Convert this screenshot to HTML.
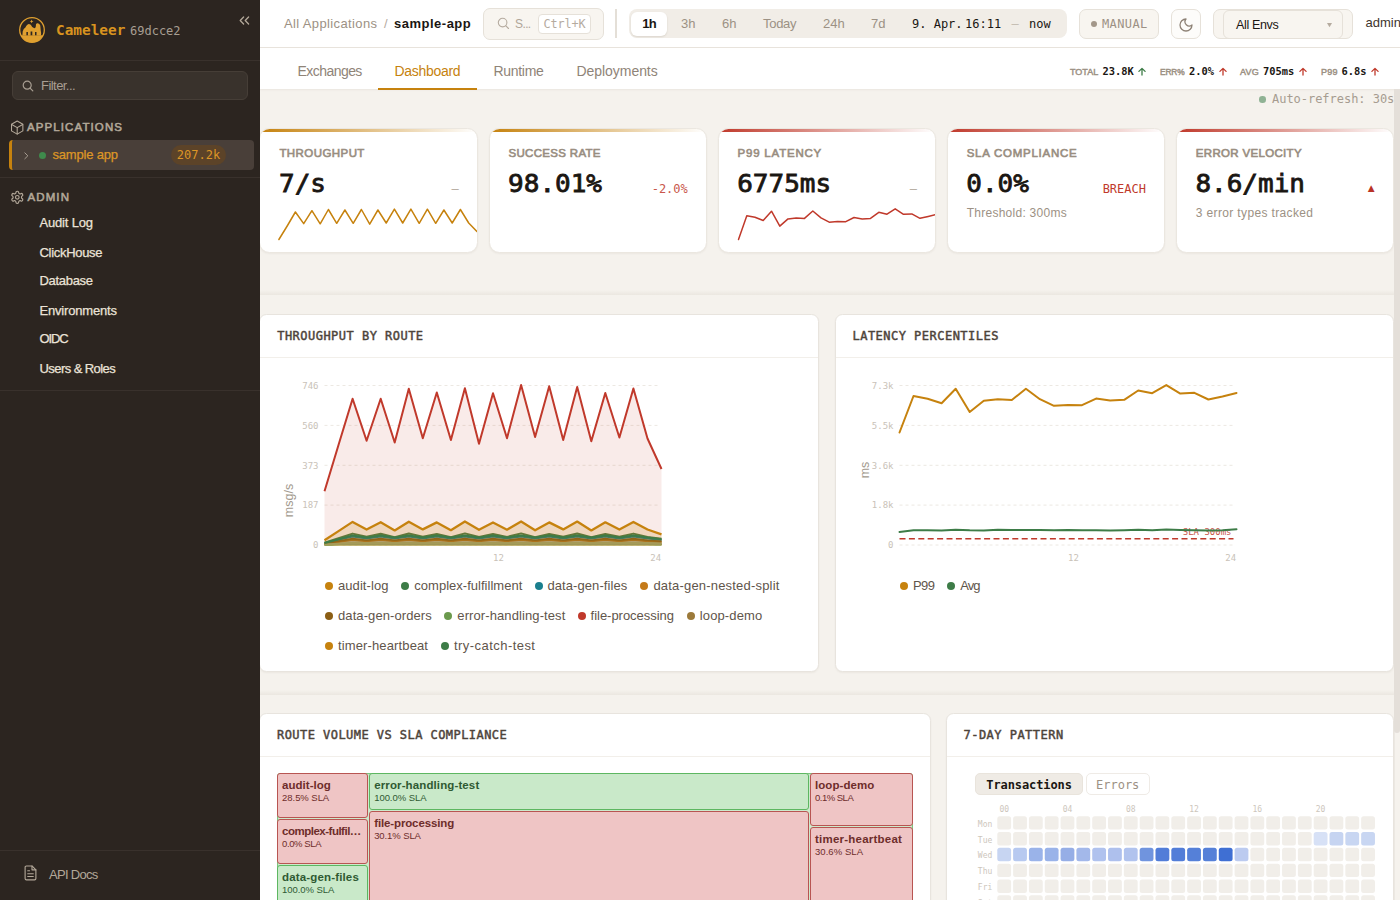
<!DOCTYPE html>
<html lang="en">
<head>
<meta charset="utf-8">
<title>Cameleer – sample-app Dashboard</title>
<style>
*{box-sizing:border-box;margin:0;padding:0}
html,body{width:1400px;height:900px;overflow:hidden}
body{position:relative;background:#f5f2ed;font-family:"Liberation Sans",Arial,sans-serif;font-size:13px;color:#1a1612;-webkit-font-smoothing:antialiased}
.mono{font-family:"DejaVu Sans Mono","Liberation Mono",monospace}
.abs{position:absolute;white-space:nowrap}
svg{position:absolute;overflow:visible}

/* ---------- sidebar ---------- */
#sidebar{position:absolute;left:0;top:0;width:260px;height:900px;background:#2c2520;color:#e8e0d4;z-index:5}
#sidebar .hr{position:absolute;left:0;width:260px;height:1px;background:#39312c}
#brand{left:56px;top:20px;line-height:20px;font-size:14.4px;font-weight:700;color:#d8931f}
#ver{left:130px;top:22px;line-height:18px;font-size:12px;color:#a89e92}
#filter{position:absolute;left:12px;top:71px;width:236px;height:29px;border-radius:6px;background:#39322c;border:1px solid #463e37}
#filter span{left:28px;top:4.5px;line-height:18px;font-size:13px;letter-spacing:-.55px;color:#a89e92}
.sect{font-size:11.5px;font-weight:400;letter-spacing:1.1px;color:#b3a899;line-height:16px;-webkit-text-stroke:.55px #b3a899}
#approw{position:absolute;left:9px;top:140px;width:245px;height:30px;border-radius:4px;background:#493f39;border-left:3px solid #c6820e;overflow:hidden}
#badge{position:absolute;left:171px;top:145px;width:55px;height:20px;border-radius:10px;background:#5c4328;color:#dc9626;font-size:12px;line-height:20px;text-align:center}
.nav{left:39.5px;font-size:13px;line-height:18px;color:#ebe3d8;-webkit-text-stroke:.25px #ebe3d8}

/* ---------- top bar ---------- */
#topbar{position:absolute;left:260px;top:0;width:1140px;height:48px;background:#fff;border-bottom:1px solid #e9e4dd}
#tabbar{position:absolute;left:260px;top:48px;width:1140px;height:41px;background:#fff;box-shadow:0 1px 2px rgba(60,40,20,.06)}
.muted{color:#9c9184}
.tab{top:61px;line-height:18px;font-size:14px;color:#8f8478}
.box{position:absolute;border:1px solid #e6e1d9;border-radius:7px;background:#f8f5f0}
.rng{top:14.9px;line-height:18px;font-size:13px;color:#9c9184}
.stl{top:65px;line-height:14px;font-size:9px;font-weight:400;letter-spacing:0;color:#9c9184;-webkit-text-stroke:.45px #9c9184}
.stv{top:63px;line-height:16px;font-size:10.4px;font-weight:700;color:#1a1612}

/* ---------- content ---------- */
.card{position:absolute;background:#fff;border:1px solid #e8e4de;border-radius:7.5px;box-shadow:0 1px 2px rgba(60,40,20,.05)}
.kpi{position:absolute;top:128px;width:218.3px;height:125px;background:#fff;border:1px solid #ebe7e0;border-radius:10.5px;box-shadow:0 1px 2px rgba(60,40,20,.05);overflow:hidden}
.kpi .stripe{position:absolute;left:0;top:0;width:100%;height:3px}
.kpi .lbl{left:19px;top:16.2px;line-height:16px;font-size:11.5px;font-weight:400;letter-spacing:.43px;color:#988d80;-webkit-text-stroke:.6px #988d80}
.kpi .val{left:18.6px;top:36.9px;line-height:34px;font-size:26px;font-weight:400;color:#1a1612;-webkit-text-stroke:.85px #1a1612;transform:scaleY(.935);transform-origin:0 26.3px}
.kpi .sub{left:19px;top:75.5px;line-height:16px;font-size:12px;color:#9c9184}
.kpi .trend{right:18px;top:51.5px;line-height:16px;font-size:12px}
.sep{position:absolute;left:260px;width:1134px;height:5px;background:linear-gradient(to bottom,rgba(235,231,224,0),#ebe7e0)}
.ctitle{line-height:16px;font-size:12px;font-weight:400;letter-spacing:.48px;color:#4d433a;-webkit-text-stroke:.45px #4d433a}
.chr{position:absolute;left:0;width:100%;height:1px;background:#f2efea}
.ax{font-family:"DejaVu Sans Mono","Liberation Mono",monospace;font-size:9px;fill:#c9c2b8}
.lg{line-height:18px;font-size:13px;color:#5f554b}
.tm{position:absolute;border-radius:3px;overflow:hidden}
.tm.r{background:#efc5c5;border:1.2px solid #b85552;color:#6e2d2b}
.tm.g{background:#c9e9c9;border:1.2px solid #5db761;color:#2f5a33}
.tm b{position:absolute;left:3.9px;top:2.6px;line-height:16px;font-size:11.5px;font-weight:700;white-space:nowrap}
.tm span{position:absolute;left:3.9px;top:16.6px;line-height:14px;font-size:9.5px;white-space:nowrap}
</style>
</head>
<body>

<!-- ======================= SIDEBAR ======================= -->
<aside id="sidebar">
  <svg style="left:19px;top:16.8px" width="26" height="26" viewBox="0 0 26 26">
    <circle cx="13" cy="13" r="12.3" fill="#2c2520" stroke="#dfa030" stroke-width="1.3"/>
    <path d="M1.9 18.2A12.2 12.2 0 0 0 24.1 18.2Z" fill="#dfa030"/>
    <path d="M3.4 18.4L3.7 14.6Q4.4 11.6 6.4 10.6Q8 7 10 7Q12 7 13.2 10L15.4 11.3Q16.6 11.3 16.8 9.6L17 7.3Q17.5 6.1 18.8 6.3L20.3 7Q21.5 8.2 21.4 9.8L21.7 13.2Q22.3 15.4 22 18.4Z" fill="#dfa030"/>
    <path d="M7.4 15h1.5v3.2H7.4zM11.6 14.6h1.7v3.6h-1.7zM16 15h1.5v3.2H16z" fill="#2c2520"/>
    <path d="M12.6 2.6l.6 1.3 1.3.5-1.3.5-.6 1.3-.6-1.3-1.3-.5 1.3-.5z" fill="#dfa030"/>
  </svg>
  <div class="abs mono" id="brand">Cameleer</div>
  <div class="abs mono" id="ver">69dcce2</div>
  <svg style="left:239px;top:16px" width="11" height="9" viewBox="0 0 11 9" fill="none" stroke="#b3a899" stroke-width="1.3" stroke-linecap="round" stroke-linejoin="round"><path d="M4.6 1L1.2 4.5 4.6 8M9.6 1L6.2 4.5 9.6 8"/></svg>
  <div class="hr" style="top:60px"></div>

  <div id="filter">
    <svg style="left:9px;top:8px" width="12" height="12" viewBox="0 0 12 12" fill="none" stroke="#a89e92" stroke-width="1.2" stroke-linecap="round"><circle cx="5.2" cy="5.2" r="4"/><path d="M8.3 8.3l2.5 2.5"/></svg>
    <span class="abs">Filter...</span>
  </div>

  <svg style="left:9.8px;top:119.8px" width="14.4" height="15.3" viewBox="0 0 16 17" fill="none" stroke="#b3a899" stroke-width="1.2" stroke-linejoin="round" stroke-linecap="round"><path d="M8 1.2l6.3 3.5v7.4L8 15.7l-6.3-3.6V4.7z"/><path d="M1.9 4.9L8 8.5l6.1-3.6M8 8.5v7"/></svg>
  <div class="abs sect" style="left:27px;top:119px">APPLICATIONS</div>

  <div id="approw"></div>
  <svg style="left:24.3px;top:151.6px" width="5" height="7.6" viewBox="0 0 6 9" fill="none" stroke="#a89e92" stroke-width="1.2" stroke-linecap="round" stroke-linejoin="round"><path d="M1 1l3.6 3.5L1 8"/></svg>
  <div style="position:absolute;left:39.2px;top:151.6px;width:7.2px;height:7.2px;border-radius:50%;background:#3f8a4c"></div>
  <div class="abs" style="left:52.5px;top:146px;line-height:18px;font-size:13px;letter-spacing:-.19px;color:#dc9626;-webkit-text-stroke:.25px #dc9626">sample app</div>
  <div id="badge" class="mono">207.2k</div>
  <div class="hr" style="top:177px"></div>

  <svg style="left:9.6px;top:189.6px" width="14.6" height="14.6" viewBox="0 0 24 24" fill="none" stroke="#b3a899" stroke-width="1.9" stroke-linecap="round" stroke-linejoin="round"><path d="M12.22 2h-.44a2 2 0 0 0-2 2v.18a2 2 0 0 1-1 1.73l-.43.25a2 2 0 0 1-2 0l-.15-.08a2 2 0 0 0-2.73.73l-.22.38a2 2 0 0 0 .73 2.73l.15.1a2 2 0 0 1 1 1.72v.51a2 2 0 0 1-1 1.74l-.15.09a2 2 0 0 0-.73 2.73l.22.38a2 2 0 0 0 2.73.73l.15-.08a2 2 0 0 1 2 0l.43.25a2 2 0 0 1 1 1.73V20a2 2 0 0 0 2 2h.44a2 2 0 0 0 2-2v-.18a2 2 0 0 1 1-1.73l.43-.25a2 2 0 0 1 2 0l.15.08a2 2 0 0 0 2.73-.73l.22-.39a2 2 0 0 0-.73-2.73l-.15-.08a2 2 0 0 1-1-1.74v-.5a2 2 0 0 1 1-1.74l.15-.09a2 2 0 0 0 .73-2.73l-.22-.38a2 2 0 0 0-2.73-.73l-.15.08a2 2 0 0 1-2 0l-.43-.25a2 2 0 0 1-1-1.73V4a2 2 0 0 0-2-2z"/><circle cx="12" cy="12" r="3"/></svg>
  <div class="abs sect" style="left:27.5px;top:189px">ADMIN</div>
  <div class="abs nav" style="top:214px;letter-spacing:-.18px">Audit Log</div>
  <div class="abs nav" style="top:244px;letter-spacing:-.3px">ClickHouse</div>
  <div class="abs nav" style="top:272px;letter-spacing:-.3px">Database</div>
  <div class="abs nav" style="top:302px;letter-spacing:-.18px">Environments</div>
  <div class="abs nav" style="top:330px;letter-spacing:-1.1px">OIDC</div>
  <div class="abs nav" style="top:360px;letter-spacing:-.57px">Users &amp; Roles</div>
  <div class="hr" style="top:390px"></div>

  <div class="hr" style="top:850px"></div>
  <svg style="left:23.6px;top:864.6px" width="13" height="15.8" viewBox="0 0 14 17" fill="none" stroke="#b3a899" stroke-width="1.2" stroke-linejoin="round" stroke-linecap="round"><path d="M8.6 1H2.6A1.4 1.4 0 0 0 1.2 2.4v12.2A1.4 1.4 0 0 0 2.6 16h8.8a1.4 1.4 0 0 0 1.4-1.4V5.2z"/><path d="M8.6 1v4.2h4.2M4 6.2h2M4 9.4h6M4 12.4h6"/></svg>
  <div class="abs" style="left:49px;top:866px;line-height:18px;font-size:13px;letter-spacing:-.7px;color:#b3a899">API Docs</div>
</aside>

<!-- ======================= TOP BAR ======================= -->
<header id="topbar">
  <div class="abs muted" style="left:24px;top:15px;line-height:18px;font-size:13px;letter-spacing:.37px">All Applications</div>
  <div class="abs" style="left:124px;top:15px;line-height:18px;font-size:13px;color:#b5ab9f">/</div>
  <div class="abs" style="left:134px;top:15px;line-height:18px;font-size:13px;font-weight:700;letter-spacing:.5px;color:#1a1612">sample-app</div>

  <div class="box" style="left:223px;top:8px;width:120.5px;height:31.5px">
    <svg style="left:13px;top:8px" width="13" height="13" viewBox="0 0 13 13" fill="none" stroke="#b5ab9f" stroke-width="1.1" stroke-linecap="round"><circle cx="5.6" cy="5.6" r="4.3"/><path d="M8.9 8.9l2.6 2.6"/></svg>
    <div class="abs muted" style="left:31px;top:5.5px;line-height:18px;font-size:12px;letter-spacing:-.6px;color:#b0a699">S...</div>
    <div class="abs mono" style="left:54px;top:4.5px;width:53px;height:20px;border:1px solid #e6e1d9;border-radius:4px;background:#fff;line-height:18px;font-size:11.8px;letter-spacing:-.1px;text-align:center;color:#b5ab9f">Ctrl+K</div>
  </div>

  <div style="position:absolute;left:355px;top:9px;width:1.6px;height:29px;background:#e4dfd7"></div>

  <div style="position:absolute;left:369px;top:9.4px;width:438px;height:29px;border-radius:8px;background:#f1ede7"></div>
  <div style="position:absolute;left:371px;top:12px;width:36px;height:24px;border-radius:6px;background:#fff;box-shadow:0 1px 2px rgba(60,40,20,.12)"></div>
  <div class="abs rng" style="left:371px;width:36px;text-align:center;font-weight:700;letter-spacing:-.9px;color:#1a1612">1h</div>
  <div class="abs rng" style="left:421px">3h</div>
  <div class="abs rng" style="left:462px">6h</div>
  <div class="abs rng" style="left:503px;letter-spacing:-.3px">Today</div>
  <div class="abs rng" style="left:563px">24h</div>
  <div class="abs rng" style="left:611px">7d</div>
  <div class="abs mono" style="left:652px;top:15px;line-height:18px;font-size:12px;color:#1a1612">9. Apr.</div>
  <div class="abs mono" style="left:705px;top:15px;line-height:18px;font-size:12px;color:#1a1612">16:11</div>
  <div class="abs mono" style="left:751.5px;top:15px;line-height:18px;font-size:12px;color:#c4bcb1">–</div>
  <div class="abs mono" style="left:769px;top:15px;line-height:18px;font-size:12px;color:#1a1612">now</div>

  <div class="box" style="left:819px;top:8.5px;width:80px;height:30.5px">
    <div style="position:absolute;left:10.5px;top:11.5px;width:6px;height:6px;border-radius:50%;background:#a3978a"></div>
    <div class="abs mono" style="left:22px;top:5px;line-height:18px;font-size:12px;letter-spacing:.4px;color:#9c9184">MANUAL</div>
  </div>

  <div class="box" style="left:910.5px;top:8.5px;width:30px;height:30.5px;background:#fdfcfa">
    <svg style="left:6.8px;top:7.2px" width="16" height="16" viewBox="0 0 24 24" fill="none" stroke="#8d8175" stroke-width="1.9" stroke-linecap="round" stroke-linejoin="round"><path d="M12 3a6.4 6.4 0 0 0 9 9 9 9 0 1 1-9-9z"/></svg>
  </div>

  <div class="box" style="left:953px;top:8.5px;width:140px;height:30.5px"></div>
  <div class="box" style="left:963px;top:9.5px;width:120px;height:29px;border-radius:6px">
    <div class="abs" style="left:12px;top:5px;line-height:18px;font-size:12.5px;color:#1a1612;letter-spacing:-.35px">All Envs</div>
    <svg style="left:103.3px;top:12.3px" width="5" height="4.2" viewBox="0 0 6 5"><path d="M0 0h6L3 5z" fill="#b5ab9f"/></svg>
  </div>
  <div class="abs" style="left:1105.5px;top:14px;line-height:18px;font-size:13px;color:#3e352d">admin</div>
</header>

<nav id="tabbar">
  <div class="abs tab" style="left:37.5px;top:13.6px;letter-spacing:-.55px">Exchanges</div>
  <div class="abs tab" style="left:134.5px;top:13.6px;color:#c6820e;letter-spacing:-.3px">Dashboard</div>
  <div class="abs tab" style="left:233.5px;top:13.6px;letter-spacing:-.3px">Runtime</div>
  <div class="abs tab" style="left:316.5px;top:13.6px;letter-spacing:-.05px">Deployments</div>
  <div style="position:absolute;left:118px;top:39.5px;width:99px;height:2px;background:#c6820e"></div>

  <div class="abs stl" style="left:810px;top:17px">TOTAL</div>
  <div class="abs stv mono" style="left:842.5px;top:15px">23.8K</div>
  <div class="abs stl" style="left:900px;top:17px;font-size:8.4px;letter-spacing:-.15px">ERR%</div>
  <div class="abs stv mono" style="left:929px;top:15px">2.0%</div>
  <div class="abs stl" style="left:980px;top:17px;letter-spacing:.2px">AVG</div>
  <div class="abs stv mono" style="left:1003px;top:15px">705ms</div>
  <div class="abs stl" style="left:1061px;top:17px;letter-spacing:.25px">P99</div>
  <div class="abs stv mono" style="left:1081.5px;top:15px">6.8s</div>
  <svg style="left:877px;top:18px" width="10" height="10" viewBox="0 0 10 10" fill="none" stroke="#3d7c47" stroke-width="1.3" stroke-linecap="round" stroke-linejoin="round"><path d="M5 9V2.4M1.9 5.4L5 2.4l3.1 3"/></svg>
  <svg style="left:957.5px;top:18px" width="10" height="10" viewBox="0 0 10 10" fill="none" stroke="#c0392b" stroke-width="1.3" stroke-linecap="round" stroke-linejoin="round"><path d="M5 9V2.4M1.9 5.4L5 2.4l3.1 3"/></svg>
  <svg style="left:1037.5px;top:18px" width="10" height="10" viewBox="0 0 10 10" fill="none" stroke="#c0392b" stroke-width="1.3" stroke-linecap="round" stroke-linejoin="round"><path d="M5 9V2.4M1.9 5.4L5 2.4l3.1 3"/></svg>
  <svg style="left:1110px;top:18px" width="10" height="10" viewBox="0 0 10 10" fill="none" stroke="#c0392b" stroke-width="1.3" stroke-linecap="round" stroke-linejoin="round"><path d="M5 9V2.4M1.9 5.4L5 2.4l3.1 3"/></svg>
</nav>

<!--MAIN-->
<!-- ======================= CONTENT ======================= -->
<main>
<div style="position:absolute;left:1259px;top:96px;width:6.5px;height:6.5px;border-radius:50%;background:#8fb294"></div>
<div class="abs mono" style="left:1272px;top:90px;line-height:18px;font-size:12px;color:#a69c90;letter-spacing:-.03px">Auto-refresh: 30s</div>
<section class="kpi" style="left:259.4px"><div class="stripe" style="background:linear-gradient(to right,#c6820e,#c6820e00)"></div><div class="abs lbl">THROUGHPUT</div><div class="abs val mono">7/s</div><div class="abs trend mono" style="color:#b5ab9f">–</div><svg style="left:0;top:0" width="217" height="123" viewBox="0 0 217 123" fill="none"><path d="M18.9 110.5 L27.2 97.0 L35.4 83.0 L43.7 94.6 L51.9 81.7 L60.2 94.8 L68.4 80.5 L76.7 94.3 L84.9 81.0 L93.2 94.3 L101.4 80.5 L109.7 95.2 L117.9 81.0 L126.2 94.0 L134.4 80.1 L142.7 94.0 L150.9 80.1 L159.2 94.3 L167.4 80.2 L175.7 94.3 L183.9 81.0 L192.2 94.0 L200.4 80.5 L208.7 94.0 L216.9 102.5" stroke="#c6820e" stroke-width="1.5" stroke-linejoin="round" stroke-linecap="round"/></svg></section>
<section class="kpi" style="left:488.5px"><div class="stripe" style="background:linear-gradient(to right,#c6820e,#c6820e00)"></div><div class="abs lbl" style="letter-spacing:.31px">SUCCESS RATE</div><div class="abs val mono">98.01%</div><div class="abs trend mono" style="color:#c9574b">-2.0%</div></section>
<section class="kpi" style="left:717.6px"><div class="stripe" style="background:linear-gradient(to right,#c0392b,#c0392b00)"></div><div class="abs lbl" style="letter-spacing:.78px">P99 LATENCY</div><div class="abs val mono">6775ms</div><div class="abs trend mono" style="color:#b5ab9f">–</div><svg style="left:0;top:0" width="217" height="123" viewBox="0 0 217 123" fill="none"><path d="M19.5 110.5 L27.8 86.7 L36.0 88.3 L44.2 91.5 L52.5 82.2 L60.8 97.1 L69.0 89.9 L77.2 88.9 L85.5 89.4 L93.8 82.0 L102.0 88.9 L110.2 93.2 L118.5 92.6 L126.8 92.7 L135.0 88.5 L143.2 89.9 L151.5 89.4 L159.8 83.3 L168.0 85.2 L176.2 79.8 L184.5 85.3 L192.8 84.9 L201.0 89.3 L209.2 87.4 L217.5 85.5" stroke="#c0392b" stroke-width="1.5" stroke-linejoin="round" stroke-linecap="round"/></svg></section>
<section class="kpi" style="left:946.7px"><div class="stripe" style="background:linear-gradient(to right,#c0392b,#c0392b00)"></div><div class="abs lbl" style="letter-spacing:.74px">SLA COMPLIANCE</div><div class="abs val mono">0.0%</div><div class="abs trend mono" style="color:#c0392b">BREACH</div><div class="abs sub" style="letter-spacing:.26px">Threshold: 300ms</div></section>
<section class="kpi" style="left:1175.8px"><div class="stripe" style="background:linear-gradient(to right,#c0392b,#c0392b00)"></div><div class="abs lbl" style="letter-spacing:.32px">ERROR VELOCITY</div><div class="abs val mono">8.6/min</div><div class="abs trend" style="color:#b93226;font-size:11.5px;right:16.3px;top:50.5px">▲</div><div class="abs sub" style="letter-spacing:.36px">3 error types tracked</div></section>
<div class="sep" style="top:290px"></div>
<div class="sep" style="top:690px"></div>
<section class="card" style="left:259.4px;top:313.9px;width:560px;height:358.2px"><div class="abs ctitle mono" style="left:16.8px;top:12.7px">THROUGHPUT BY ROUTE</div><div class="chr" style="top:41.9px"></div></section>
<section class="card" style="left:834.7px;top:313.9px;width:559.4px;height:358.2px"><div class="abs ctitle mono" style="left:16.8px;top:12.7px">LATENCY PERCENTILES</div><div class="chr" style="top:41.9px"></div></section>
<svg style="left:0;top:0" width="1400" height="900" viewBox="0 0 1400 900">
<line x1="324.5" y1="385.5" x2="658.5" y2="385.5" stroke="#ece8e2" stroke-width="1" stroke-dasharray="3 3"/>
<line x1="324.5" y1="425.4" x2="658.5" y2="425.4" stroke="#ece8e2" stroke-width="1" stroke-dasharray="3 3"/>
<line x1="324.5" y1="465.3" x2="658.5" y2="465.3" stroke="#ece8e2" stroke-width="1" stroke-dasharray="3 3"/>
<line x1="324.5" y1="505.1" x2="658.5" y2="505.1" stroke="#ece8e2" stroke-width="1" stroke-dasharray="3 3"/>
<line x1="324.5" y1="545" x2="658.5" y2="545" stroke="#ece8e2" stroke-width="1" stroke-dasharray="3 3"/>
<text class="ax" x="318.5" y="388.7" text-anchor="end">746</text>
<text class="ax" x="318.5" y="428.59999999999997" text-anchor="end">560</text>
<text class="ax" x="318.5" y="468.5" text-anchor="end">373</text>
<text class="ax" x="318.5" y="508.3" text-anchor="end">187</text>
<text class="ax" x="318.5" y="548.2" text-anchor="end">0</text>
<text class="ax" x="493.0" y="561.2">12</text>
<text class="ax" x="661.2" y="561.2" text-anchor="end">24</text>
<text x="293" y="500.5" transform="rotate(-90 293 500.5)" text-anchor="middle" font-family="Liberation Sans, sans-serif" font-size="12.5" fill="#a39a8e">msg/s</text>
<path d="M324.5 544.8 L338.5 544.5 L352.6 544.2 L366.6 544.5 L380.7 544.2 L394.7 544.5 L408.8 544.2 L422.8 544.5 L436.8 544.2 L450.9 544.5 L464.9 544.2 L479.0 544.5 L493.0 544.2 L507.0 544.5 L521.1 544.2 L535.1 544.5 L549.2 544.2 L563.2 544.5 L577.2 544.2 L591.3 544.5 L605.3 544.2 L619.4 544.5 L633.4 544.2 L647.5 544.5 L661.5 544.6 L661.5 545 L324.5 545 Z" fill="#c6820e" fill-opacity="0.1"/>
<path d="M324.5 544.8 L338.5 544.5 L352.6 544.2 L366.6 544.5 L380.7 544.2 L394.7 544.5 L408.8 544.2 L422.8 544.5 L436.8 544.2 L450.9 544.5 L464.9 544.2 L479.0 544.5 L493.0 544.2 L507.0 544.5 L521.1 544.2 L535.1 544.5 L549.2 544.2 L563.2 544.5 L577.2 544.2 L591.3 544.5 L605.3 544.2 L619.4 544.5 L633.4 544.2 L647.5 544.5 L661.5 544.6" fill="none" stroke="#c6820e" stroke-width="2" stroke-linejoin="round" stroke-linecap="butt"/>
<path d="M324.5 542.6 L338.5 538.2 L352.6 533.6 L366.6 536.8 L380.7 533.8 L394.7 537.3 L408.8 533.5 L422.8 536.7 L436.8 534.0 L450.9 537.2 L464.9 533.4 L479.0 537.0 L493.0 534.0 L507.0 536.9 L521.1 533.4 L535.1 537.2 L549.2 534.0 L563.2 536.7 L577.2 533.5 L591.3 537.3 L605.3 533.9 L619.4 536.8 L633.4 533.6 L647.5 537.0 L661.5 538.8 L661.5 545 L324.5 545 Z" fill="#3d7c47" fill-opacity="0.1"/>
<path d="M324.5 542.6 L338.5 538.2 L352.6 533.6 L366.6 536.8 L380.7 533.8 L394.7 537.3 L408.8 533.5 L422.8 536.7 L436.8 534.0 L450.9 537.2 L464.9 533.4 L479.0 537.0 L493.0 534.0 L507.0 536.9 L521.1 533.4 L535.1 537.2 L549.2 534.0 L563.2 536.7 L577.2 533.5 L591.3 537.3 L605.3 533.9 L619.4 536.8 L633.4 533.6 L647.5 537.0 L661.5 538.8" fill="none" stroke="#3d7c47" stroke-width="2" stroke-linejoin="round" stroke-linecap="butt"/>
<path d="M324.5 543.2 L338.5 539.9 L352.6 536.5 L366.6 538.4 L380.7 536.5 L394.7 538.4 L408.8 536.5 L422.8 538.4 L436.8 536.5 L450.9 538.4 L464.9 536.5 L479.0 538.4 L493.0 536.5 L507.0 538.4 L521.1 536.5 L535.1 538.4 L549.2 536.5 L563.2 538.4 L577.2 536.5 L591.3 538.4 L605.3 536.5 L619.4 538.4 L633.4 536.5 L647.5 538.4 L661.5 540.0 L661.5 545 L324.5 545 Z" fill="#1a7f8e" fill-opacity="0.1"/>
<path d="M324.5 543.2 L338.5 539.9 L352.6 536.5 L366.6 538.4 L380.7 536.5 L394.7 538.4 L408.8 536.5 L422.8 538.4 L436.8 536.5 L450.9 538.4 L464.9 536.5 L479.0 538.4 L493.0 536.5 L507.0 538.4 L521.1 536.5 L535.1 538.4 L549.2 536.5 L563.2 538.4 L577.2 536.5 L591.3 538.4 L605.3 536.5 L619.4 538.4 L633.4 536.5 L647.5 538.4 L661.5 540.0" fill="none" stroke="#1a7f8e" stroke-width="2" stroke-linejoin="round" stroke-linecap="butt"/>
<path d="M324.5 544.0 L338.5 541.9 L352.6 539.8 L366.6 541.2 L380.7 539.8 L394.7 541.2 L408.8 539.8 L422.8 541.2 L436.8 539.8 L450.9 541.2 L464.9 539.8 L479.0 541.2 L493.0 539.8 L507.0 541.2 L521.1 539.8 L535.1 541.2 L549.2 539.8 L563.2 541.2 L577.2 539.8 L591.3 541.2 L605.3 539.8 L619.4 541.2 L633.4 539.8 L647.5 541.2 L661.5 542.0 L661.5 545 L324.5 545 Z" fill="#c47a1a" fill-opacity="0.1"/>
<path d="M324.5 544.0 L338.5 541.9 L352.6 539.8 L366.6 541.2 L380.7 539.8 L394.7 541.2 L408.8 539.8 L422.8 541.2 L436.8 539.8 L450.9 541.2 L464.9 539.8 L479.0 541.2 L493.0 539.8 L507.0 541.2 L521.1 539.8 L535.1 541.2 L549.2 539.8 L563.2 541.2 L577.2 539.8 L591.3 541.2 L605.3 539.8 L619.4 541.2 L633.4 539.8 L647.5 541.2 L661.5 542.0" fill="none" stroke="#c47a1a" stroke-width="2" stroke-linejoin="round" stroke-linecap="butt"/>
<path d="M324.5 543.6 L338.5 541.1 L352.6 538.6 L366.6 540.2 L380.7 538.6 L394.7 540.2 L408.8 538.6 L422.8 540.2 L436.8 538.6 L450.9 540.2 L464.9 538.6 L479.0 540.2 L493.0 538.6 L507.0 540.2 L521.1 538.6 L535.1 540.2 L549.2 538.6 L563.2 540.2 L577.2 538.6 L591.3 540.2 L605.3 538.6 L619.4 540.2 L633.4 538.6 L647.5 540.2 L661.5 541.2 L661.5 545 L324.5 545 Z" fill="#8b5e14" fill-opacity="0.25"/>
<path d="M324.5 543.6 L338.5 541.1 L352.6 538.6 L366.6 540.2 L380.7 538.6 L394.7 540.2 L408.8 538.6 L422.8 540.2 L436.8 538.6 L450.9 540.2 L464.9 538.6 L479.0 540.2 L493.0 538.6 L507.0 540.2 L521.1 538.6 L535.1 540.2 L549.2 538.6 L563.2 540.2 L577.2 538.6 L591.3 540.2 L605.3 538.6 L619.4 540.2 L633.4 538.6 L647.5 540.2 L661.5 541.2" fill="none" stroke="#8b5e14" stroke-width="1.6" stroke-linejoin="round" stroke-linecap="butt"/>
<path d="M324.5 544.8 L338.5 544.3 L352.6 543.9 L366.6 544.2 L380.7 543.9 L394.7 544.2 L408.8 543.9 L422.8 544.2 L436.8 543.9 L450.9 544.2 L464.9 543.9 L479.0 544.2 L493.0 543.9 L507.0 544.2 L521.1 543.9 L535.1 544.2 L549.2 543.9 L563.2 544.2 L577.2 543.9 L591.3 544.2 L605.3 543.9 L619.4 544.2 L633.4 543.9 L647.5 544.2 L661.5 544.4 L661.5 545 L324.5 545 Z" fill="#6b9a4d" fill-opacity="0.1"/>
<path d="M324.5 544.8 L338.5 544.3 L352.6 543.9 L366.6 544.2 L380.7 543.9 L394.7 544.2 L408.8 543.9 L422.8 544.2 L436.8 543.9 L450.9 544.2 L464.9 543.9 L479.0 544.2 L493.0 543.9 L507.0 544.2 L521.1 543.9 L535.1 544.2 L549.2 543.9 L563.2 544.2 L577.2 543.9 L591.3 544.2 L605.3 543.9 L619.4 544.2 L633.4 543.9 L647.5 544.2 L661.5 544.4" fill="none" stroke="#6b9a4d" stroke-width="2" stroke-linejoin="round" stroke-linecap="butt"/>
<path d="M324.5 491.2 L338.5 445.0 L352.6 398.8 L366.6 440.8 L380.7 398.8 L394.7 442.5 L408.8 388.8 L422.8 438.2 L436.8 392.5 L450.9 440.0 L464.9 388.2 L479.0 443.8 L493.0 393.2 L507.0 438.2 L521.1 385.0 L535.1 437.0 L549.2 386.2 L563.2 440.0 L577.2 387.0 L591.3 441.2 L605.3 393.0 L619.4 437.5 L633.4 388.5 L647.5 438.5 L661.5 469.0 L661.5 545 L324.5 545 Z" fill="#c0392b" fill-opacity="0.1"/>
<path d="M324.5 491.2 L338.5 445.0 L352.6 398.8 L366.6 440.8 L380.7 398.8 L394.7 442.5 L408.8 388.8 L422.8 438.2 L436.8 392.5 L450.9 440.0 L464.9 388.2 L479.0 443.8 L493.0 393.2 L507.0 438.2 L521.1 385.0 L535.1 437.0 L549.2 386.2 L563.2 440.0 L577.2 387.0 L591.3 441.2 L605.3 393.0 L619.4 437.5 L633.4 388.5 L647.5 438.5 L661.5 469.0" fill="none" stroke="#c0392b" stroke-width="2" stroke-linejoin="round" stroke-linecap="butt"/>
<path d="M324.5 544.6 L338.5 543.7 L352.6 542.7 L366.6 543.1 L380.7 542.7 L394.7 543.1 L408.8 542.7 L422.8 543.1 L436.8 542.7 L450.9 543.1 L464.9 542.7 L479.0 543.1 L493.0 542.7 L507.0 543.1 L521.1 542.7 L535.1 543.1 L549.2 542.7 L563.2 543.1 L577.2 542.7 L591.3 543.1 L605.3 542.7 L619.4 543.1 L633.4 542.7 L647.5 543.1 L661.5 543.6 L661.5 545 L324.5 545 Z" fill="#aca46f" fill-opacity="0.85"/>
<path d="M324.5 544.6 L338.5 543.7 L352.6 542.7 L366.6 543.1 L380.7 542.7 L394.7 543.1 L408.8 542.7 L422.8 543.1 L436.8 542.7 L450.9 543.1 L464.9 542.7 L479.0 543.1 L493.0 542.7 L507.0 543.1 L521.1 542.7 L535.1 543.1 L549.2 542.7 L563.2 543.1 L577.2 542.7 L591.3 543.1 L605.3 542.7 L619.4 543.1 L633.4 542.7 L647.5 543.1 L661.5 543.6" fill="none" stroke="#aca46f" stroke-width="2" stroke-linejoin="round" stroke-linecap="butt"/>
<path d="M324.5 540.2 L338.5 531.1 L352.6 521.9 L366.6 529.5 L380.7 522.2 L394.7 530.4 L408.8 521.7 L422.8 529.4 L436.8 522.4 L450.9 530.2 L464.9 521.5 L479.0 529.8 L493.0 522.5 L507.0 529.7 L521.1 521.5 L535.1 530.3 L549.2 522.4 L563.2 529.4 L577.2 521.6 L591.3 530.4 L605.3 522.3 L619.4 529.6 L633.4 521.9 L647.5 529.5 L661.5 534.3 L661.5 545 L324.5 545 Z" fill="#c6820e" fill-opacity="0.2"/>
<path d="M324.5 540.2 L338.5 531.1 L352.6 521.9 L366.6 529.5 L380.7 522.2 L394.7 530.4 L408.8 521.7 L422.8 529.4 L436.8 522.4 L450.9 530.2 L464.9 521.5 L479.0 529.8 L493.0 522.5 L507.0 529.7 L521.1 521.5 L535.1 530.3 L549.2 522.4 L563.2 529.4 L577.2 521.6 L591.3 530.4 L605.3 522.3 L619.4 529.6 L633.4 521.9 L647.5 529.5 L661.5 534.3" fill="none" stroke="#c6820e" stroke-width="2.3" stroke-linejoin="round" stroke-linecap="butt"/>
<path d="M324.5 543.0 L338.5 539.2 L352.6 535.4 L366.6 537.4 L380.7 535.4 L394.7 537.4 L408.8 535.4 L422.8 537.4 L436.8 535.4 L450.9 537.4 L464.9 535.4 L479.0 537.4 L493.0 535.4 L507.0 537.4 L521.1 535.4 L535.1 537.4 L549.2 535.4 L563.2 537.4 L577.2 535.4 L591.3 537.4 L605.3 535.4 L619.4 537.4 L633.4 535.4 L647.5 537.4 L661.5 539.2 L661.5 545 L324.5 545 Z" fill="#3d7c47" fill-opacity="0.1"/>
<path d="M324.5 543.0 L338.5 539.2 L352.6 535.4 L366.6 537.4 L380.7 535.4 L394.7 537.4 L408.8 535.4 L422.8 537.4 L436.8 535.4 L450.9 537.4 L464.9 535.4 L479.0 537.4 L493.0 535.4 L507.0 537.4 L521.1 535.4 L535.1 537.4 L549.2 535.4 L563.2 537.4 L577.2 535.4 L591.3 537.4 L605.3 535.4 L619.4 537.4 L633.4 535.4 L647.5 537.4 L661.5 539.2" fill="none" stroke="#3d7c47" stroke-width="2" stroke-linejoin="round" stroke-linecap="butt"/>
<line x1="899.5" y1="385.5" x2="1233.5" y2="385.5" stroke="#ece8e2" stroke-width="1" stroke-dasharray="3 3"/>
<line x1="899.5" y1="425.4" x2="1233.5" y2="425.4" stroke="#ece8e2" stroke-width="1" stroke-dasharray="3 3"/>
<line x1="899.5" y1="465.3" x2="1233.5" y2="465.3" stroke="#ece8e2" stroke-width="1" stroke-dasharray="3 3"/>
<line x1="899.5" y1="505.1" x2="1233.5" y2="505.1" stroke="#ece8e2" stroke-width="1" stroke-dasharray="3 3"/>
<line x1="899.5" y1="545" x2="1233.5" y2="545" stroke="#ece8e2" stroke-width="1" stroke-dasharray="3 3"/>
<text class="ax" x="893.5" y="388.7" text-anchor="end">7.3k</text>
<text class="ax" x="893.5" y="428.59999999999997" text-anchor="end">5.5k</text>
<text class="ax" x="893.5" y="468.5" text-anchor="end">3.6k</text>
<text class="ax" x="893.5" y="508.3" text-anchor="end">1.8k</text>
<text class="ax" x="893.5" y="548.2" text-anchor="end">0</text>
<text class="ax" x="1068.0" y="561.2">12</text>
<text class="ax" x="1236.2" y="561.2" text-anchor="end">24</text>
<text x="869" y="470" transform="rotate(-90 869 470)" text-anchor="middle" font-family="Liberation Sans, sans-serif" font-size="12.5" fill="#a39a8e">ms</text>
<line x1="899.5" y1="538.8" x2="1233.5" y2="538.8" stroke="#c0392b" stroke-width="1.4" stroke-dasharray="6 3.4"/>
<text x="1231.5" y="535" text-anchor="end" font-family="DejaVu Sans Mono, monospace" font-size="9" fill="#c9574b">SLA 300ms</text>
<path d="M899.5 432.5 L913.5 396.0 L927.6 398.8 L941.6 403.2 L955.7 388.8 L969.7 412.0 L983.8 400.8 L997.8 399.2 L1011.8 400.0 L1025.9 388.8 L1039.9 399.2 L1054.0 405.8 L1068.0 405.0 L1082.0 405.2 L1096.1 398.6 L1110.1 400.6 L1124.2 399.8 L1138.2 390.5 L1152.2 393.2 L1166.3 385.1 L1180.3 393.6 L1194.4 392.8 L1208.4 399.5 L1222.5 396.5 L1236.5 393.0" fill="none" stroke="#c6820e" stroke-width="2" stroke-linejoin="round" stroke-linecap="round"/>
<path d="M899.5 532.0 L913.5 530.3 L927.6 530.2 L941.6 530.4 L955.7 529.8 L969.7 530.3 L983.8 530.4 L997.8 529.7 L1011.8 530.0 L1025.9 530.1 L1039.9 530.1 L1054.0 530.2 L1068.0 530.0 L1082.0 530.3 L1096.1 530.2 L1110.1 530.4 L1124.2 530.2 L1138.2 529.8 L1152.2 530.3 L1166.3 529.6 L1180.3 530.0 L1194.4 530.3 L1208.4 530.4 L1222.5 530.2 L1236.5 529.2" fill="none" stroke="#3d7c47" stroke-width="2" stroke-linejoin="round" stroke-linecap="round"/>
</svg>
<div style="position:absolute;left:324.7px;top:582.2px;width:8px;height:8px;border-radius:50%;background:#c6820e"></div>
<div class="abs lg" style="left:338px;top:577.3px;letter-spacing:0.07px">audit-log</div>
<div style="position:absolute;left:400.9px;top:582.2px;width:8px;height:8px;border-radius:50%;background:#3d7c47"></div>
<div class="abs lg" style="left:414.3px;top:577.3px;letter-spacing:0.02px">complex-fulfillment</div>
<div style="position:absolute;left:534.8px;top:582.2px;width:8px;height:8px;border-radius:50%;background:#1a7f8e"></div>
<div class="abs lg" style="left:547.4px;top:577.3px;letter-spacing:0.09px">data-gen-files</div>
<div style="position:absolute;left:639.8px;top:582.2px;width:8px;height:8px;border-radius:50%;background:#c47a1a"></div>
<div class="abs lg" style="left:653.4px;top:577.3px;letter-spacing:0.19px">data-gen-nested-split</div>
<div style="position:absolute;left:324.7px;top:612.2px;width:8px;height:8px;border-radius:50%;background:#8b5e14"></div>
<div class="abs lg" style="left:338px;top:607.3px;letter-spacing:0.09px">data-gen-orders</div>
<div style="position:absolute;left:443.9px;top:612.2px;width:8px;height:8px;border-radius:50%;background:#6b9a4d"></div>
<div class="abs lg" style="left:457.3px;top:607.3px;letter-spacing:0.1px">error-handling-test</div>
<div style="position:absolute;left:578.0px;top:612.2px;width:8px;height:8px;border-radius:50%;background:#c0392b"></div>
<div class="abs lg" style="left:590.6px;top:607.3px;letter-spacing:-0.03px">file-processing</div>
<div style="position:absolute;left:686.8px;top:612.2px;width:8px;height:8px;border-radius:50%;background:#9c7a3a"></div>
<div class="abs lg" style="left:699.8px;top:607.3px;letter-spacing:0.12px">loop-demo</div>
<div style="position:absolute;left:324.7px;top:642.2px;width:8px;height:8px;border-radius:50%;background:#c6820e"></div>
<div class="abs lg" style="left:338px;top:637.3px;letter-spacing:0.13px">timer-heartbeat</div>
<div style="position:absolute;left:440.6px;top:642.2px;width:8px;height:8px;border-radius:50%;background:#3d7c47"></div>
<div class="abs lg" style="left:454px;top:637.3px;letter-spacing:0.45px">try-catch-test</div>
<div style="position:absolute;left:900.0px;top:582.2px;width:8px;height:8px;border-radius:50%;background:#c6820e"></div>
<div class="abs lg" style="left:912.9px;top:577.3px;letter-spacing:-0.55px">P99</div>
<div style="position:absolute;left:946.6px;top:582.2px;width:8px;height:8px;border-radius:50%;background:#3d7c47"></div>
<div class="abs lg" style="left:960.2px;top:577.3px;letter-spacing:-0.9px">Avg</div>
<section class="card" style="left:259.4px;top:713px;width:671.7px;height:260px"><div class="abs ctitle mono" style="left:16.6px;top:12.6px;letter-spacing:.45px">ROUTE VOLUME VS SLA COMPLIANCE</div><div class="chr" style="top:42.2px"></div></section>
<div style="position:absolute;left:277.3px;top:773px;width:636px;height:140px;background:#cdeacd;border:1px solid #7cc47f;border-radius:3px"></div>
<div class="tm r" style="left:277.2px;top:773.1px;width:91.1px;height:44.6px"><b style="letter-spacing:0.02px">audit-log</b><span style="letter-spacing:-0.05px">28.5% SLA</span></div>
<div class="tm r" style="left:277.2px;top:819.2px;width:91.1px;height:44.7px"><b style="letter-spacing:-0.5px">complex-fulfil…</b><span style="letter-spacing:-0.4px">0.0% SLA</span></div>
<div class="tm g" style="left:277.2px;top:865.4px;width:91.1px;height:44.6px"><b style="letter-spacing:0.15px">data-gen-files</b><span style="letter-spacing:-0.06px">100.0% SLA</span></div>
<div class="tm g" style="left:369.3px;top:773.1px;width:439.7px;height:36.5px"><b style="letter-spacing:0.12px">error-handling-test</b><span style="letter-spacing:-0.06px">100.0% SLA</span></div>
<div class="tm r" style="left:369.3px;top:811.1px;width:439.7px;height:150px"><b style="letter-spacing:-0.13px">file-processing</b><span style="letter-spacing:-0.1px">30.1% SLA</span></div>
<div class="tm r" style="left:810.1px;top:773.1px;width:103.1px;height:52.7px"><b style="letter-spacing:0.06px">loop-demo</b><span style="letter-spacing:-0.5px">0.1% SLA</span></div>
<div class="tm r" style="left:810.1px;top:827px;width:103.1px;height:120px"><b style="letter-spacing:0.23px">timer-heartbeat</b><span style="letter-spacing:0.06px">30.6% SLA</span></div>
<section class="card" style="left:946.2px;top:713px;width:447.8px;height:260px"><div class="abs ctitle mono" style="left:16.3px;top:12.6px">7-DAY PATTERN</div><div class="chr" style="top:42.2px"></div></section>
<div class="abs mono" style="left:975px;top:772.8px;width:108.2px;height:22.4px;border-radius:5px;background:#efebe5;border:1px solid #e9e4dc;line-height:22.5px;font-size:12px;font-weight:700;text-align:center;color:#1a1612;letter-spacing:-.1px">Transactions</div>
<div class="abs mono" style="left:1085.7px;top:772.8px;width:64px;height:22.4px;border-radius:5px;background:#fff;border:1px solid #efebe6;line-height:22.5px;font-size:12px;text-align:center;color:#9c9184">Errors</div>
<svg style="left:0;top:0" width="1400" height="900" viewBox="0 0 1400 900">
<text x="1004.2" y="812.2" text-anchor="middle" font-family="DejaVu Sans Mono, monospace" font-size="8" fill="#cdc6bc">00</text>
<text x="1067.5" y="812.2" text-anchor="middle" font-family="DejaVu Sans Mono, monospace" font-size="8" fill="#cdc6bc">04</text>
<text x="1130.8" y="812.2" text-anchor="middle" font-family="DejaVu Sans Mono, monospace" font-size="8" fill="#cdc6bc">08</text>
<text x="1194.0" y="812.2" text-anchor="middle" font-family="DejaVu Sans Mono, monospace" font-size="8" fill="#cdc6bc">12</text>
<text x="1257.3" y="812.2" text-anchor="middle" font-family="DejaVu Sans Mono, monospace" font-size="8" fill="#cdc6bc">16</text>
<text x="1320.6" y="812.2" text-anchor="middle" font-family="DejaVu Sans Mono, monospace" font-size="8" fill="#cdc6bc">20</text>
<text x="992.3" y="826.8" text-anchor="end" font-family="DejaVu Sans Mono, monospace" font-size="8" fill="#cdc6bc">Mon</text>
<rect x="997.30" y="816.20" width="13.8" height="13.4" rx="2.5" fill="#f1eee9"/>
<rect x="1013.12" y="816.20" width="13.8" height="13.4" rx="2.5" fill="#f1eee9"/>
<rect x="1028.94" y="816.20" width="13.8" height="13.4" rx="2.5" fill="#f1eee9"/>
<rect x="1044.76" y="816.20" width="13.8" height="13.4" rx="2.5" fill="#f1eee9"/>
<rect x="1060.58" y="816.20" width="13.8" height="13.4" rx="2.5" fill="#f1eee9"/>
<rect x="1076.40" y="816.20" width="13.8" height="13.4" rx="2.5" fill="#f1eee9"/>
<rect x="1092.22" y="816.20" width="13.8" height="13.4" rx="2.5" fill="#f1eee9"/>
<rect x="1108.04" y="816.20" width="13.8" height="13.4" rx="2.5" fill="#f1eee9"/>
<rect x="1123.86" y="816.20" width="13.8" height="13.4" rx="2.5" fill="#f1eee9"/>
<rect x="1139.68" y="816.20" width="13.8" height="13.4" rx="2.5" fill="#f1eee9"/>
<rect x="1155.50" y="816.20" width="13.8" height="13.4" rx="2.5" fill="#f1eee9"/>
<rect x="1171.32" y="816.20" width="13.8" height="13.4" rx="2.5" fill="#f1eee9"/>
<rect x="1187.14" y="816.20" width="13.8" height="13.4" rx="2.5" fill="#f1eee9"/>
<rect x="1202.96" y="816.20" width="13.8" height="13.4" rx="2.5" fill="#f1eee9"/>
<rect x="1218.78" y="816.20" width="13.8" height="13.4" rx="2.5" fill="#f1eee9"/>
<rect x="1234.60" y="816.20" width="13.8" height="13.4" rx="2.5" fill="#f1eee9"/>
<rect x="1250.42" y="816.20" width="13.8" height="13.4" rx="2.5" fill="#f1eee9"/>
<rect x="1266.24" y="816.20" width="13.8" height="13.4" rx="2.5" fill="#f1eee9"/>
<rect x="1282.06" y="816.20" width="13.8" height="13.4" rx="2.5" fill="#f1eee9"/>
<rect x="1297.88" y="816.20" width="13.8" height="13.4" rx="2.5" fill="#f1eee9"/>
<rect x="1313.70" y="816.20" width="13.8" height="13.4" rx="2.5" fill="#f1eee9"/>
<rect x="1329.52" y="816.20" width="13.8" height="13.4" rx="2.5" fill="#f1eee9"/>
<rect x="1345.34" y="816.20" width="13.8" height="13.4" rx="2.5" fill="#f1eee9"/>
<rect x="1361.16" y="816.20" width="13.8" height="13.4" rx="2.5" fill="#f1eee9"/>
<text x="992.3" y="842.6" text-anchor="end" font-family="DejaVu Sans Mono, monospace" font-size="8" fill="#cdc6bc">Tue</text>
<rect x="997.30" y="832.02" width="13.8" height="13.4" rx="2.5" fill="#f1eee9"/>
<rect x="1013.12" y="832.02" width="13.8" height="13.4" rx="2.5" fill="#f1eee9"/>
<rect x="1028.94" y="832.02" width="13.8" height="13.4" rx="2.5" fill="#f1eee9"/>
<rect x="1044.76" y="832.02" width="13.8" height="13.4" rx="2.5" fill="#f1eee9"/>
<rect x="1060.58" y="832.02" width="13.8" height="13.4" rx="2.5" fill="#f1eee9"/>
<rect x="1076.40" y="832.02" width="13.8" height="13.4" rx="2.5" fill="#f1eee9"/>
<rect x="1092.22" y="832.02" width="13.8" height="13.4" rx="2.5" fill="#f1eee9"/>
<rect x="1108.04" y="832.02" width="13.8" height="13.4" rx="2.5" fill="#f1eee9"/>
<rect x="1123.86" y="832.02" width="13.8" height="13.4" rx="2.5" fill="#f1eee9"/>
<rect x="1139.68" y="832.02" width="13.8" height="13.4" rx="2.5" fill="#f1eee9"/>
<rect x="1155.50" y="832.02" width="13.8" height="13.4" rx="2.5" fill="#f1eee9"/>
<rect x="1171.32" y="832.02" width="13.8" height="13.4" rx="2.5" fill="#f1eee9"/>
<rect x="1187.14" y="832.02" width="13.8" height="13.4" rx="2.5" fill="#f1eee9"/>
<rect x="1202.96" y="832.02" width="13.8" height="13.4" rx="2.5" fill="#f1eee9"/>
<rect x="1218.78" y="832.02" width="13.8" height="13.4" rx="2.5" fill="#f1eee9"/>
<rect x="1234.60" y="832.02" width="13.8" height="13.4" rx="2.5" fill="#f1eee9"/>
<rect x="1250.42" y="832.02" width="13.8" height="13.4" rx="2.5" fill="#f1eee9"/>
<rect x="1266.24" y="832.02" width="13.8" height="13.4" rx="2.5" fill="#f1eee9"/>
<rect x="1282.06" y="832.02" width="13.8" height="13.4" rx="2.5" fill="#f1eee9"/>
<rect x="1297.88" y="832.02" width="13.8" height="13.4" rx="2.5" fill="#f1eee9"/>
<rect x="1313.70" y="832.02" width="13.8" height="13.4" rx="2.5" fill="#d7e1f6"/>
<rect x="1329.52" y="832.02" width="13.8" height="13.4" rx="2.5" fill="#c6d4f1"/>
<rect x="1345.34" y="832.02" width="13.8" height="13.4" rx="2.5" fill="#c8d6f2"/>
<rect x="1361.16" y="832.02" width="13.8" height="13.4" rx="2.5" fill="#c8d6f2"/>
<text x="992.3" y="858.4" text-anchor="end" font-family="DejaVu Sans Mono, monospace" font-size="8" fill="#cdc6bc">Wed</text>
<rect x="997.30" y="847.84" width="13.8" height="13.4" rx="2.5" fill="#c7d5f2"/>
<rect x="1013.12" y="847.84" width="13.8" height="13.4" rx="2.5" fill="#b7c9f0"/>
<rect x="1028.94" y="847.84" width="13.8" height="13.4" rx="2.5" fill="#9ab3e9"/>
<rect x="1044.76" y="847.84" width="13.8" height="13.4" rx="2.5" fill="#9ab3e9"/>
<rect x="1060.58" y="847.84" width="13.8" height="13.4" rx="2.5" fill="#96aee6"/>
<rect x="1076.40" y="847.84" width="13.8" height="13.4" rx="2.5" fill="#a3b8ea"/>
<rect x="1092.22" y="847.84" width="13.8" height="13.4" rx="2.5" fill="#b0c2ee"/>
<rect x="1108.04" y="847.84" width="13.8" height="13.4" rx="2.5" fill="#aec0ed"/>
<rect x="1123.86" y="847.84" width="13.8" height="13.4" rx="2.5" fill="#b1c3ee"/>
<rect x="1139.68" y="847.84" width="13.8" height="13.4" rx="2.5" fill="#7094de"/>
<rect x="1155.50" y="847.84" width="13.8" height="13.4" rx="2.5" fill="#527dd8"/>
<rect x="1171.32" y="847.84" width="13.8" height="13.4" rx="2.5" fill="#527dd8"/>
<rect x="1187.14" y="847.84" width="13.8" height="13.4" rx="2.5" fill="#5580d8"/>
<rect x="1202.96" y="847.84" width="13.8" height="13.4" rx="2.5" fill="#5580d8"/>
<rect x="1218.78" y="847.84" width="13.8" height="13.4" rx="2.5" fill="#3f6fd3"/>
<rect x="1234.60" y="847.84" width="13.8" height="13.4" rx="2.5" fill="#bccbf0"/>
<rect x="1250.42" y="847.84" width="13.8" height="13.4" rx="2.5" fill="#f1eee9"/>
<rect x="1266.24" y="847.84" width="13.8" height="13.4" rx="2.5" fill="#f1eee9"/>
<rect x="1282.06" y="847.84" width="13.8" height="13.4" rx="2.5" fill="#f1eee9"/>
<rect x="1297.88" y="847.84" width="13.8" height="13.4" rx="2.5" fill="#f1eee9"/>
<rect x="1313.70" y="847.84" width="13.8" height="13.4" rx="2.5" fill="#f1eee9"/>
<rect x="1329.52" y="847.84" width="13.8" height="13.4" rx="2.5" fill="#f1eee9"/>
<rect x="1345.34" y="847.84" width="13.8" height="13.4" rx="2.5" fill="#f1eee9"/>
<rect x="1361.16" y="847.84" width="13.8" height="13.4" rx="2.5" fill="#f1eee9"/>
<text x="992.3" y="874.3" text-anchor="end" font-family="DejaVu Sans Mono, monospace" font-size="8" fill="#cdc6bc">Thu</text>
<rect x="997.30" y="863.66" width="13.8" height="13.4" rx="2.5" fill="#f1eee9"/>
<rect x="1013.12" y="863.66" width="13.8" height="13.4" rx="2.5" fill="#f1eee9"/>
<rect x="1028.94" y="863.66" width="13.8" height="13.4" rx="2.5" fill="#f1eee9"/>
<rect x="1044.76" y="863.66" width="13.8" height="13.4" rx="2.5" fill="#f1eee9"/>
<rect x="1060.58" y="863.66" width="13.8" height="13.4" rx="2.5" fill="#f1eee9"/>
<rect x="1076.40" y="863.66" width="13.8" height="13.4" rx="2.5" fill="#f1eee9"/>
<rect x="1092.22" y="863.66" width="13.8" height="13.4" rx="2.5" fill="#f1eee9"/>
<rect x="1108.04" y="863.66" width="13.8" height="13.4" rx="2.5" fill="#f1eee9"/>
<rect x="1123.86" y="863.66" width="13.8" height="13.4" rx="2.5" fill="#f1eee9"/>
<rect x="1139.68" y="863.66" width="13.8" height="13.4" rx="2.5" fill="#f1eee9"/>
<rect x="1155.50" y="863.66" width="13.8" height="13.4" rx="2.5" fill="#f1eee9"/>
<rect x="1171.32" y="863.66" width="13.8" height="13.4" rx="2.5" fill="#f1eee9"/>
<rect x="1187.14" y="863.66" width="13.8" height="13.4" rx="2.5" fill="#f1eee9"/>
<rect x="1202.96" y="863.66" width="13.8" height="13.4" rx="2.5" fill="#f1eee9"/>
<rect x="1218.78" y="863.66" width="13.8" height="13.4" rx="2.5" fill="#f1eee9"/>
<rect x="1234.60" y="863.66" width="13.8" height="13.4" rx="2.5" fill="#f1eee9"/>
<rect x="1250.42" y="863.66" width="13.8" height="13.4" rx="2.5" fill="#f1eee9"/>
<rect x="1266.24" y="863.66" width="13.8" height="13.4" rx="2.5" fill="#f1eee9"/>
<rect x="1282.06" y="863.66" width="13.8" height="13.4" rx="2.5" fill="#f1eee9"/>
<rect x="1297.88" y="863.66" width="13.8" height="13.4" rx="2.5" fill="#f1eee9"/>
<rect x="1313.70" y="863.66" width="13.8" height="13.4" rx="2.5" fill="#f1eee9"/>
<rect x="1329.52" y="863.66" width="13.8" height="13.4" rx="2.5" fill="#f1eee9"/>
<rect x="1345.34" y="863.66" width="13.8" height="13.4" rx="2.5" fill="#f1eee9"/>
<rect x="1361.16" y="863.66" width="13.8" height="13.4" rx="2.5" fill="#f1eee9"/>
<text x="992.3" y="890.1" text-anchor="end" font-family="DejaVu Sans Mono, monospace" font-size="8" fill="#cdc6bc">Fri</text>
<rect x="997.30" y="879.48" width="13.8" height="13.4" rx="2.5" fill="#f1eee9"/>
<rect x="1013.12" y="879.48" width="13.8" height="13.4" rx="2.5" fill="#f1eee9"/>
<rect x="1028.94" y="879.48" width="13.8" height="13.4" rx="2.5" fill="#f1eee9"/>
<rect x="1044.76" y="879.48" width="13.8" height="13.4" rx="2.5" fill="#f1eee9"/>
<rect x="1060.58" y="879.48" width="13.8" height="13.4" rx="2.5" fill="#f1eee9"/>
<rect x="1076.40" y="879.48" width="13.8" height="13.4" rx="2.5" fill="#f1eee9"/>
<rect x="1092.22" y="879.48" width="13.8" height="13.4" rx="2.5" fill="#f1eee9"/>
<rect x="1108.04" y="879.48" width="13.8" height="13.4" rx="2.5" fill="#f1eee9"/>
<rect x="1123.86" y="879.48" width="13.8" height="13.4" rx="2.5" fill="#f1eee9"/>
<rect x="1139.68" y="879.48" width="13.8" height="13.4" rx="2.5" fill="#f1eee9"/>
<rect x="1155.50" y="879.48" width="13.8" height="13.4" rx="2.5" fill="#f1eee9"/>
<rect x="1171.32" y="879.48" width="13.8" height="13.4" rx="2.5" fill="#f1eee9"/>
<rect x="1187.14" y="879.48" width="13.8" height="13.4" rx="2.5" fill="#f1eee9"/>
<rect x="1202.96" y="879.48" width="13.8" height="13.4" rx="2.5" fill="#f1eee9"/>
<rect x="1218.78" y="879.48" width="13.8" height="13.4" rx="2.5" fill="#f1eee9"/>
<rect x="1234.60" y="879.48" width="13.8" height="13.4" rx="2.5" fill="#f1eee9"/>
<rect x="1250.42" y="879.48" width="13.8" height="13.4" rx="2.5" fill="#f1eee9"/>
<rect x="1266.24" y="879.48" width="13.8" height="13.4" rx="2.5" fill="#f1eee9"/>
<rect x="1282.06" y="879.48" width="13.8" height="13.4" rx="2.5" fill="#f1eee9"/>
<rect x="1297.88" y="879.48" width="13.8" height="13.4" rx="2.5" fill="#f1eee9"/>
<rect x="1313.70" y="879.48" width="13.8" height="13.4" rx="2.5" fill="#f1eee9"/>
<rect x="1329.52" y="879.48" width="13.8" height="13.4" rx="2.5" fill="#f1eee9"/>
<rect x="1345.34" y="879.48" width="13.8" height="13.4" rx="2.5" fill="#f1eee9"/>
<rect x="1361.16" y="879.48" width="13.8" height="13.4" rx="2.5" fill="#f1eee9"/>
<text x="992.3" y="905.9" text-anchor="end" font-family="DejaVu Sans Mono, monospace" font-size="8" fill="#cdc6bc">Sat</text>
<rect x="997.30" y="895.30" width="13.8" height="13.4" rx="2.5" fill="#f1eee9"/>
<rect x="1013.12" y="895.30" width="13.8" height="13.4" rx="2.5" fill="#f1eee9"/>
<rect x="1028.94" y="895.30" width="13.8" height="13.4" rx="2.5" fill="#f1eee9"/>
<rect x="1044.76" y="895.30" width="13.8" height="13.4" rx="2.5" fill="#f1eee9"/>
<rect x="1060.58" y="895.30" width="13.8" height="13.4" rx="2.5" fill="#f1eee9"/>
<rect x="1076.40" y="895.30" width="13.8" height="13.4" rx="2.5" fill="#f1eee9"/>
<rect x="1092.22" y="895.30" width="13.8" height="13.4" rx="2.5" fill="#f1eee9"/>
<rect x="1108.04" y="895.30" width="13.8" height="13.4" rx="2.5" fill="#f1eee9"/>
<rect x="1123.86" y="895.30" width="13.8" height="13.4" rx="2.5" fill="#f1eee9"/>
<rect x="1139.68" y="895.30" width="13.8" height="13.4" rx="2.5" fill="#f1eee9"/>
<rect x="1155.50" y="895.30" width="13.8" height="13.4" rx="2.5" fill="#f1eee9"/>
<rect x="1171.32" y="895.30" width="13.8" height="13.4" rx="2.5" fill="#f1eee9"/>
<rect x="1187.14" y="895.30" width="13.8" height="13.4" rx="2.5" fill="#f1eee9"/>
<rect x="1202.96" y="895.30" width="13.8" height="13.4" rx="2.5" fill="#f1eee9"/>
<rect x="1218.78" y="895.30" width="13.8" height="13.4" rx="2.5" fill="#f1eee9"/>
<rect x="1234.60" y="895.30" width="13.8" height="13.4" rx="2.5" fill="#f1eee9"/>
<rect x="1250.42" y="895.30" width="13.8" height="13.4" rx="2.5" fill="#f1eee9"/>
<rect x="1266.24" y="895.30" width="13.8" height="13.4" rx="2.5" fill="#f1eee9"/>
<rect x="1282.06" y="895.30" width="13.8" height="13.4" rx="2.5" fill="#f1eee9"/>
<rect x="1297.88" y="895.30" width="13.8" height="13.4" rx="2.5" fill="#f1eee9"/>
<rect x="1313.70" y="895.30" width="13.8" height="13.4" rx="2.5" fill="#f1eee9"/>
<rect x="1329.52" y="895.30" width="13.8" height="13.4" rx="2.5" fill="#f1eee9"/>
<rect x="1345.34" y="895.30" width="13.8" height="13.4" rx="2.5" fill="#f1eee9"/>
<rect x="1361.16" y="895.30" width="13.8" height="13.4" rx="2.5" fill="#f1eee9"/>
</svg>
<div style="position:absolute;left:1394px;top:89px;width:6px;height:811px;background:#f5f2ed;border-left:1px solid #ece8e2"></div>
<div style="position:absolute;left:1394px;top:89px;width:6px;height:644px;background:#e4dfd9;border-radius:0 0 3px 3px"></div>
</main>
<!--/MAIN-->
</body>
</html>
